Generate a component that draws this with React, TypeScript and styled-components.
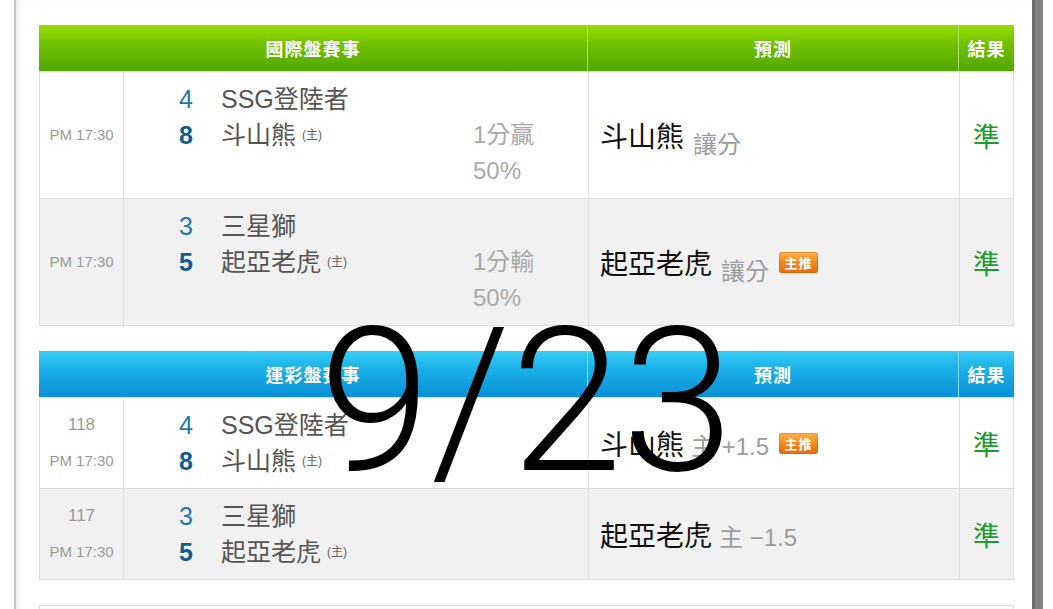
import React from 'react';
import styled, { createGlobalStyle, css } from 'styled-components';

const GlobalStyle = createGlobalStyle`
  html, body {
    margin: 0;
    padding: 0;
    background: #fff;
  }
  body {
    font-family: 'Liberation Sans', 'Noto Sans CJK TC', sans-serif;
    color: #555;
  }
`;

type Tone = 'green' | 'blue';

const headerBg: Record<Tone, string> = {
  green: 'linear-gradient(to bottom, #97dc00 0%, #72c200 40%, #52a700 100%)',
  blue: 'linear-gradient(to bottom, #38cbf2 0%, #1ab0e8 40%, #0b8fd6 100%)',
};

const headerLine: Record<Tone, string> = {
  green: '#a8e46a',
  blue: '#86d8f6',
};

const COLS = '83px 465px 371px 1fr';

const Page = styled.div`
  position: relative;
  height: 609px;
  overflow: hidden;
`;

const Frame = styled.div`
  margin-left: 14px;
  width: 1029px;
  box-sizing: border-box;
  min-height: 609px;
  border-left: 2px solid #c4c4c4;
  border-right: 8px solid #808080;
  box-shadow: inset 6px 0 6px -4px rgba(0, 0, 0, 0.1), inset -3px 0 0 #6c6c6c;
  padding: 25px 21px 0 23px;
  display: flex;
  flex-direction: column;
  gap: 25px;
`;

const Board = styled.div`
  border: 1px solid #dcdcdc;
  border-top: none;
`;

const Header = styled.div<{ $tone: Tone }>`
  display: grid;
  grid-template-columns: 548px 371px 1fr;
  height: 46px;
  margin: 0 -1px;
  background: ${({ $tone }) => headerBg[$tone]};
`;

const HeadCell = styled.div<{ $tone: Tone; $first?: boolean }>`
  display: flex;
  align-items: center;
  justify-content: center;
  color: #fff;
  font-size: 18px;
  font-weight: bold;
  letter-spacing: 1px;
  ${({ $first, $tone }) =>
    !$first &&
    css`
      border-left: 1px solid ${headerLine[$tone]};
    `}
`;

const Row = styled.div<{ $alt?: boolean }>`
  display: grid;
  grid-template-columns: ${COLS};
  background: ${({ $alt }) => ($alt ? '#f1f1f1' : '#fff')};
  border-top: 1px solid #dedede;
`;

const Cell = styled.div`
  display: flex;
  align-items: center;
  & + & {
    border-left: 1px solid #dedede;
  }
`;

const TimeCell = styled(Cell)`
  flex-direction: column;
  justify-content: center;
  color: #999;
  line-height: 36px;
`;

const GameNo = styled.span`
  font-size: 17px;
`;

const Clock = styled.span`
  font-size: 15px;
`;

const MatchCell = styled(Cell)<{ $tall?: boolean }>`
  padding: 9px 0 9px 47px;
  display: grid;
  grid-template-columns: 30px 232px auto;
  column-gap: 20px;
  align-content: start;
  align-items: start;
  line-height: 36px;
  height: ${({ $tall }) => ($tall ? '108px' : '72px')};
`;

const Score = styled.span<{ $win?: boolean }>`
  text-align: center;
  font-size: 25px;
  line-height: 36px;
  color: ${({ $win }) => ($win ? '#115d8f' : '#2077ad')};
  font-weight: ${({ $win }) => ($win ? 'bold' : 'normal')};
`;

const Team = styled.span`
  font-size: 25px;
  line-height: 36px;
  color: #555;
  white-space: nowrap;
`;

const HomeMark = styled.span`
  display: inline-block;
  font-size: 12px;
  line-height: 1;
  color: #666;
  margin-left: 6px;
  vertical-align: 5px;
`;

const Odds = styled.div`
  display: flex;
  flex-direction: column;
  font-size: 24px;
  line-height: 36px;
  color: #a8a8a8;
`;

const PredictCell = styled(Cell)`
  padding-left: 11px;
  gap: 9px;
  white-space: nowrap;
`;

const Pick = styled.span`
  font-size: 28px;
  color: #111;
`;

const Note = styled.span<{ $low?: boolean }>`
  font-size: 24px;
  color: #9c9c9c;
  position: relative;
  top: ${({ $low }) => ($low ? '7px' : '1px')};
  margin-left: ${({ $low }) => ($low ? '0' : '-2px')};
`;

const HotBadge = styled.span`
  display: inline-flex;
  align-items: center;
  justify-content: center;
  width: 39px;
  height: 21px;
  box-sizing: border-box;
  border-radius: 3px;
  background: linear-gradient(to bottom, #fbb248 0%, #f28a1e 50%, #e86a0c 100%);
  box-shadow: inset 0 0 0 1px rgba(200, 90, 0, 0.35);
  color: #fff;
  font-size: 13px;
  font-weight: bold;
  letter-spacing: 1px;
  margin-left: 1px;
`;

const ResultCell = styled(Cell)`
  justify-content: center;
  font-size: 27px;
  color: #1f9a2f;
`;

const NextBoard = styled.div`
  height: 12px;
  border: 1px solid #dedede;
  background: #fafafa;
`;

const DateStamp = styled.div`
  position: absolute;
  left: 0;
  right: 0;
  top: 282px;
  text-align: center;
  font-family: Roboto, 'Liberation Sans', sans-serif;
  font-weight: 300;
  font-size: 201px;
  line-height: 240px;
  color: #000;
  pointer-events: none;
`;

type Side = { score: number; name: string; win?: boolean; home?: boolean };

type Game = {
  no?: string;
  time: string;
  away: Side;
  home: Side;
  odds?: [string, string];
  pick: string;
  note: string;
  lowNote?: boolean;
  hot?: boolean;
  result: string;
};

const intlGames: Game[] = [
  {
    time: 'PM 17:30',
    away: { score: 4, name: 'SSG登陸者' },
    home: { score: 8, name: '斗山熊', win: true, home: true },
    odds: ['1分贏', '50%'],
    pick: '斗山熊',
    note: '讓分',
    lowNote: true,
    result: '準',
  },
  {
    time: 'PM 17:30',
    away: { score: 3, name: '三星獅' },
    home: { score: 5, name: '起亞老虎', win: true, home: true },
    odds: ['1分輸', '50%'],
    pick: '起亞老虎',
    note: '讓分',
    lowNote: true,
    hot: true,
    result: '準',
  },
];

const lotteryGames: Game[] = [
  {
    no: '118',
    time: 'PM 17:30',
    away: { score: 4, name: 'SSG登陸者' },
    home: { score: 8, name: '斗山熊', win: true, home: true },
    pick: '斗山熊',
    note: '主 +1.5',
    hot: true,
    result: '準',
  },
  {
    no: '117',
    time: 'PM 17:30',
    away: { score: 3, name: '三星獅' },
    home: { score: 5, name: '起亞老虎', win: true, home: true },
    pick: '起亞老虎',
    note: '主 −1.5',
    result: '準',
  },
];

const TeamLine = ({ side }: { side: Side }) => (
  <>
    <Score $win={side.win}>{side.score}</Score>
    <Team>
      {side.name}
      {side.home && <HomeMark>(主)</HomeMark>}
    </Team>
  </>
);

const GameRow = ({ game, alt }: { game: Game; alt?: boolean }) => (
  <Row $alt={alt}>
    <TimeCell>
      {game.no && <GameNo>{game.no}</GameNo>}
      <Clock>{game.time}</Clock>
    </TimeCell>
    <MatchCell $tall={!!game.odds}>
      <TeamLine side={game.away} />
      <span />
      <TeamLine side={game.home} />
      {game.odds ? (
        <Odds>
          <span>{game.odds[0]}</span>
          <span>{game.odds[1]}</span>
        </Odds>
      ) : (
        <span />
      )}
    </MatchCell>
    <PredictCell>
      <Pick>{game.pick}</Pick>
      <Note $low={game.lowNote}>{game.note}</Note>
      {game.hot && <HotBadge>主推</HotBadge>}
    </PredictCell>
    <ResultCell>{game.result}</ResultCell>
  </Row>
);

const GameBoard = ({ title, tone, games }: { title: string; tone: Tone; games: Game[] }) => (
  <Board>
    <Header $tone={tone}>
      <HeadCell $tone={tone} $first>
        {title}
      </HeadCell>
      <HeadCell $tone={tone}>預測</HeadCell>
      <HeadCell $tone={tone}>結果</HeadCell>
    </Header>
    {games.map((g, i) => (
      <GameRow key={i} game={g} alt={i % 2 === 1} />
    ))}
  </Board>
);

const App = () => (
  <Page>
    <GlobalStyle />
    <Frame>
      <GameBoard title="國際盤賽事" tone="green" games={intlGames} />
      <GameBoard title="運彩盤賽事" tone="blue" games={lotteryGames} />
      <NextBoard />
    </Frame>
    <DateStamp>9/23</DateStamp>
  </Page>
);

export default App;
